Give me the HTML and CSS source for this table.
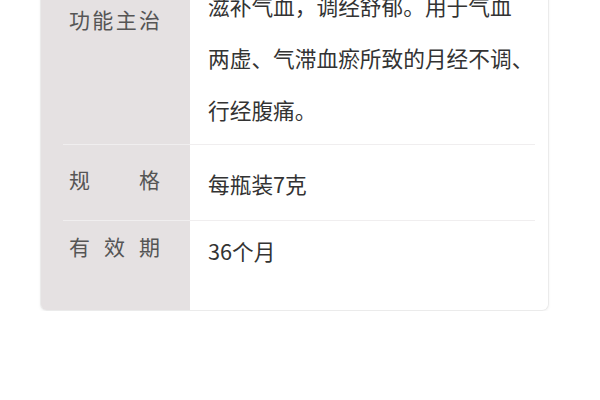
FILE: index.html
```html
<!DOCTYPE html>
<html lang="zh-CN">
<head>
  <meta charset="UTF-8" />
  <meta name="viewport" content="width=device-width, initial-scale=1.0" />
  <title>说明书</title>
  <link rel="stylesheet" href="styles.css">
</head>
<body>
  <div class="card">
    <div class="row row-first">
      <div class="label">功能主治</div>
      <div class="value">滋补气血，调经舒郁。用于气血<br>两虚、气滞血瘀所致的月经不调、<br>行经腹痛。</div>
    </div>
    <div class="row">
      <div class="label">规格</div>
      <div class="value">每瓶装7克</div>
    </div>
    <div class="row row-last">
      <div class="label">有效期</div>
      <div class="value">36个月</div>
    </div>
  </div>
</body>
</html>
```

FILE: styles.css
```css
body {
  margin: 0;
  background: #fff;
  font-family: "Noto Sans CJK SC", "Noto Sans", sans-serif;
  font-size: 21px;
}
.card {
  width: 507px;
  margin: -33px 0 0 40px;
  border: 1px solid #ebebeb;
  border-top: none;
  border-radius: 0 0 7px 7px;
  background: linear-gradient(90deg, #e5e1e2 0, #e5e1e2 149px, #fff 149px);
  box-shadow: 0 1px 3px rgba(0, 0, 0, 0.05);
}
.row {
  display: flex;
  align-items: flex-start;
  margin: 0 13px 0 22px;
  padding: 13px 0 10px;
  border-bottom: 1px solid #f0eeef;
}
.row-first {
  padding-bottom: 8px;
}
.row-last {
  padding: 4px 0 33px;
  border-bottom: none;
}
.label {
  width: 91px;
  margin: 6px 48px 0 6px;
  line-height: 30px;
  color: #555;
  text-align: justify;
  text-align-last: justify;
}
.row-first .label {
  margin-top: 24px;
}
.value {
  flex: 1;
  font-size: 21.7px;
  line-height: 52px;
  color: #333;
  white-space: nowrap;
}
```
